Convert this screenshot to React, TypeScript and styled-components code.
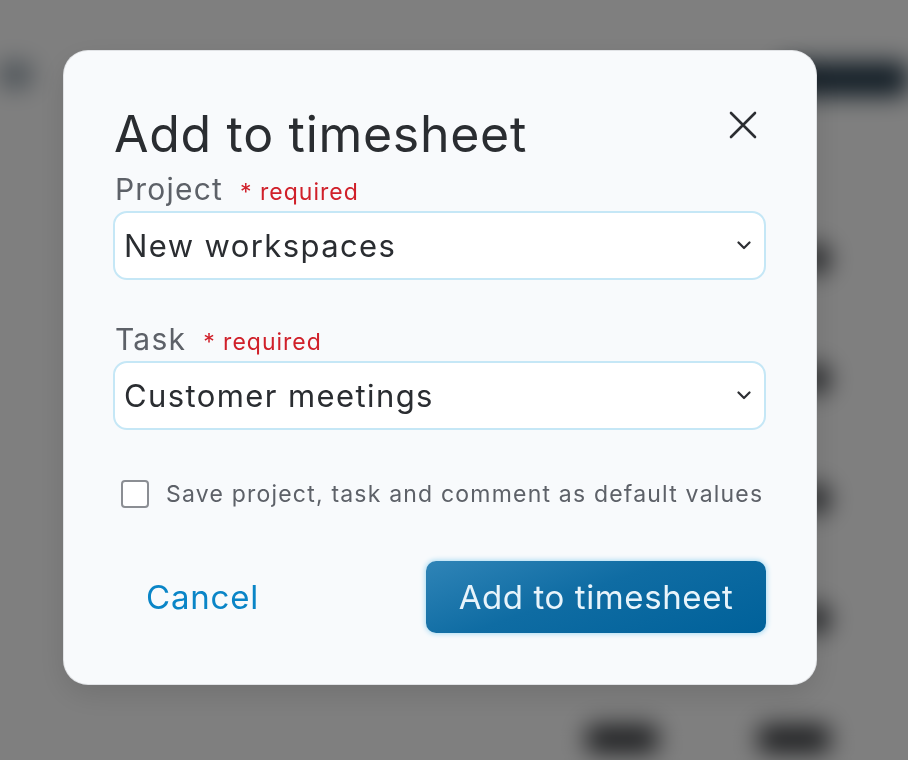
import React from 'react';
import styled, { createGlobalStyle } from 'styled-components';

const Global = createGlobalStyle`
  html, body { margin: 0; padding: 0; overflow: hidden; }
  body { font-family: Inter, "Noto Sans", sans-serif; background: #fff; }
  * { box-sizing: border-box; }
`;

/* ---------- blurred page behind the dialog ---------- */
const Page = styled.div`
  width: 908px;
  height: 760px;
  overflow: hidden;
  background: #ffffff;
  filter: blur(12px);
  display: flex;
  flex-direction: column;
`;

const PageHeader = styled.div`
  height: 198px;
  flex-shrink: 0;
  display: flex;
  align-items: flex-start;
  justify-content: space-between;
  padding-top: 62px;
`;

const Skeleton = styled.div<{ $w: number; $h: number; $c: string }>`
  width: ${(p) => p.$w}px;
  height: ${(p) => p.$h}px;
  background: ${(p) => p.$c};
  border-radius: 8px;
  flex-shrink: 0;
`;

const PageRow = styled.div`
  height: 120px;
  flex-shrink: 0;
  border-top: 2px solid #eceef0;
  display: flex;
  align-items: center;
  justify-content: flex-end;
  gap: 100px;
  padding-right: 78px;
`;

const RowIcon = styled.div`
  width: 30px;
  height: 30px;
  border-radius: 50%;
  background: #3a3d42;
`;

/* ---------- overlay + dialog ---------- */
const Overlay = styled.div`
  position: fixed;
  inset: 0;
  background: rgba(0, 0, 0, 0.5);
  display: flex;
  align-items: flex-start;
  justify-content: flex-start;
  padding: 51px 0 0 64px;
`;

const Dialog = styled.div`
  width: 752px;
  height: 633px;
  background: #f8fafc;
  border-radius: 24px;
  box-shadow: 0 0 0 1px #e1e3e6, 0 10px 30px rgba(0, 0, 0, 0.12);
  padding: 52px 50px 0 49px;
  display: flex;
  flex-direction: column;
`;

const Header = styled.div`
  display: flex;
  align-items: flex-start;
  justify-content: space-between;
  padding-left: 1px;
`;

const Title = styled.h1`
  margin: 0;
  font-size: 50px;
  line-height: 62px;
  font-weight: 400;
  color: #2a2d31;
  letter-spacing: 0.7px;
`;

const CloseButton = styled.button`
  width: 28px;
  height: 28px;
  margin: 8px 9px 0 0;
  padding: 0;
  border: none;
  background: transparent;
  display: flex;
  align-items: center;
  justify-content: center;
  cursor: pointer;
`;

const Field = styled.div<{ $mt: number }>`
  display: flex;
  flex-direction: column;
  margin-top: ${(p) => p.$mt}px;
`;

const LabelRow = styled.div`
  display: flex;
  align-items: baseline;
  gap: 17px;
  padding-left: 2px;
  height: 44px;
`;

const Label = styled.label`
  font-size: 30px;
  line-height: 44px;
  letter-spacing: 1.2px;
  color: #5d6168;
`;

const Required = styled.span`
  font-size: 23px;
  letter-spacing: 1px;
  color: #d0202a;
`;

const Select = styled.div`
  height: 69px;
  flex-shrink: 0;
  background: #ffffff;
  border: 2px solid #c5e7f6;
  border-radius: 14px;
  display: flex;
  align-items: center;
  justify-content: space-between;
  padding: 0 13px 0 9px;
`;

const SelectValue = styled.span`
  font-size: 31px;
  letter-spacing: 1.4px;
  color: #2a2d31;
`;

const CheckRow = styled.label`
  display: flex;
  align-items: center;
  gap: 17px;
  margin-top: 50px;
  padding-left: 8px;
`;

const Box = styled.span`
  width: 28px;
  height: 28px;
  border: 2px solid #8b8e93;
  border-radius: 4px;
  background: #fff;
  flex-shrink: 0;
`;

const CheckText = styled.span`
  font-size: 23px;
  letter-spacing: 1.2px;
  color: #5d6168;
  white-space: nowrap;
`;

const Footer = styled.div`
  display: flex;
  align-items: center;
  justify-content: space-between;
  margin-top: 53px;
`;

const CancelButton = styled.button`
  border: none;
  background: transparent;
  padding: 0;
  margin-left: 33px;
  font-family: inherit;
  font-size: 33px;
  letter-spacing: 0.8px;
  color: #0a85c7;
  cursor: pointer;
`;

const PrimaryButton = styled.button`
  width: 340px;
  height: 72px;
  border: none;
  border-radius: 10px;
  background: linear-gradient(160deg, #2f84b7 0%, #0f6ca3 45%, #00619a 100%);
  box-shadow: 0 0 5px 1px #a9dbf3;
  font-family: inherit;
  font-size: 33px;
  letter-spacing: 0.6px;
  color: #e8f4fb;
  cursor: pointer;
`;

const Chevron = () => (
  <svg width="14" height="9" viewBox="0 0 14 9" fill="none">
    <path d="M1.5 1.5 L7 7 L12.5 1.5" stroke="#2d2f33" strokeWidth="2.2" strokeLinecap="round" strokeLinejoin="round" />
  </svg>
);

export default function App() {
  return (
    <>
      <Global />
      <Page aria-hidden="true">
        <PageHeader>
          <Skeleton $w={44} $h={26} $c="#97a4ae" style={{ marginLeft: -12 }} />
          <Skeleton $w={130} $h={34} $c="#23394a" />
        </PageHeader>
        {[0, 1, 2, 3].map((i) => (
          <PageRow key={i}>
            <RowIcon />
          </PageRow>
        ))}
        <PageRow>
          <Skeleton $w={72} $h={28} $c="#3a3c40" />
          <Skeleton $w={72} $h={28} $c="#3a3c40" />
        </PageRow>
      </Page>
      <Overlay>
        <Dialog role="dialog" aria-label="Add to timesheet">
          <Header>
            <Title>Add to timesheet</Title>
            <CloseButton aria-label="Close">
              <svg width="28" height="28" viewBox="0 0 28 28" fill="none">
                <path d="M2 2 L26 26 M26 2 L2 26" stroke="#2b2d31" strokeWidth="2.6" strokeLinecap="round" />
              </svg>
            </CloseButton>
          </Header>
          <Field $mt={2}>
            <LabelRow>
              <Label>Project</Label>
              <Required>* required</Required>
            </LabelRow>
            <Select>
              <SelectValue>New workspaces</SelectValue>
              <Chevron />
            </Select>
          </Field>
          <Field $mt={37}>
            <LabelRow>
              <Label>Task</Label>
              <Required>* required</Required>
            </LabelRow>
            <Select>
              <SelectValue>Customer meetings</SelectValue>
              <Chevron />
            </Select>
          </Field>
          <CheckRow>
            <Box />
            <CheckText>Save project, task and comment as default values</CheckText>
          </CheckRow>
          <Footer>
            <CancelButton>Cancel</CancelButton>
            <PrimaryButton>Add to timesheet</PrimaryButton>
          </Footer>
        </Dialog>
      </Overlay>
    </>
  );
}
